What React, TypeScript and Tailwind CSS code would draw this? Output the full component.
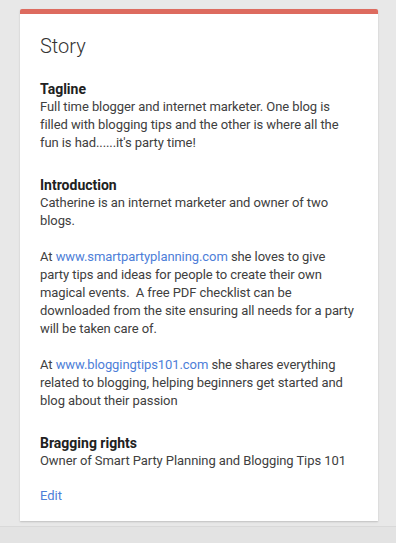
import React from "react";

const font = { fontFamily: "Roboto, 'Noto Sans', Arial, sans-serif" };

function Section({ title, children }: { title: string; children: React.ReactNode }) {
  return (
    <div>
      <div className="text-[14px] leading-[18px] font-bold text-[#212121]">{title}</div>
      <div className="text-[13px] leading-[18px] tracking-[-0.08px] text-[#404040] whitespace-nowrap">{children}</div>
    </div>
  );
}

function L({ children }: { children: React.ReactNode }) {
  return <div>{children}</div>;
}

function Link({ children }: { children: React.ReactNode }) {
  return <a className="text-[#4d7ed8] no-underline">{children}</a>;
}

export default function App() {
  return (
    <div className="h-[543px] w-[396px] bg-[#e8e8e8] flex flex-col overflow-hidden" style={font}>
      <div className="pt-[9px] pl-[20px]">
        <div className="w-[358px] bg-white rounded-t-[2px] border-t-[5px] border-[#dd6b5f] shadow-[0_1px_2px_rgba(0,0,0,0.18)] px-5 pt-[18px] pb-4">
          <div className="text-[20px] leading-[28px] font-light text-[#333333]">Story</div>
          <div className="mt-5 flex flex-col gap-6">
            <Section title="Tagline">
              <L>Full time blogger and internet marketer. One blog is</L>
              <L>filled with blogging tips and the other is where all the</L>
              <L>fun is had......it's party time!</L>
            </Section>
            <Section title="Introduction">
              <L>Catherine is an internet marketer and owner of two</L>
              <L>blogs.</L>
              <div className="h-[18px]" />
              <L>
                At <Link>www.smartpartyplanning.com</Link> she loves to give
              </L>
              <L>party tips and ideas for people to create their own</L>
              <L>magical events.{"\u00a0"} A free PDF checklist can be</L>
              <L>downloaded from the site ensuring all needs for a party</L>
              <L>will be taken care of.</L>
              <div className="h-[18px]" />
              <L>
                At <Link>www.bloggingtips101.com</Link> she shares everything
              </L>
              <L>related to blogging, helping beginners get started and</L>
              <L>blog about their passion</L>
            </Section>
            <Section title="Bragging rights">
              <L>Owner of Smart Party Planning and Blogging Tips 101</L>
            </Section>
          </div>
          <div className="mt-[17px] text-[13px] leading-[18px] text-[#4d7ed8]">Edit</div>
        </div>
      </div>
      <div className="mt-[5px] flex-1 border-t border-[#d9d9d9] bg-[#e3e3e3]" />
    </div>
  );
}
